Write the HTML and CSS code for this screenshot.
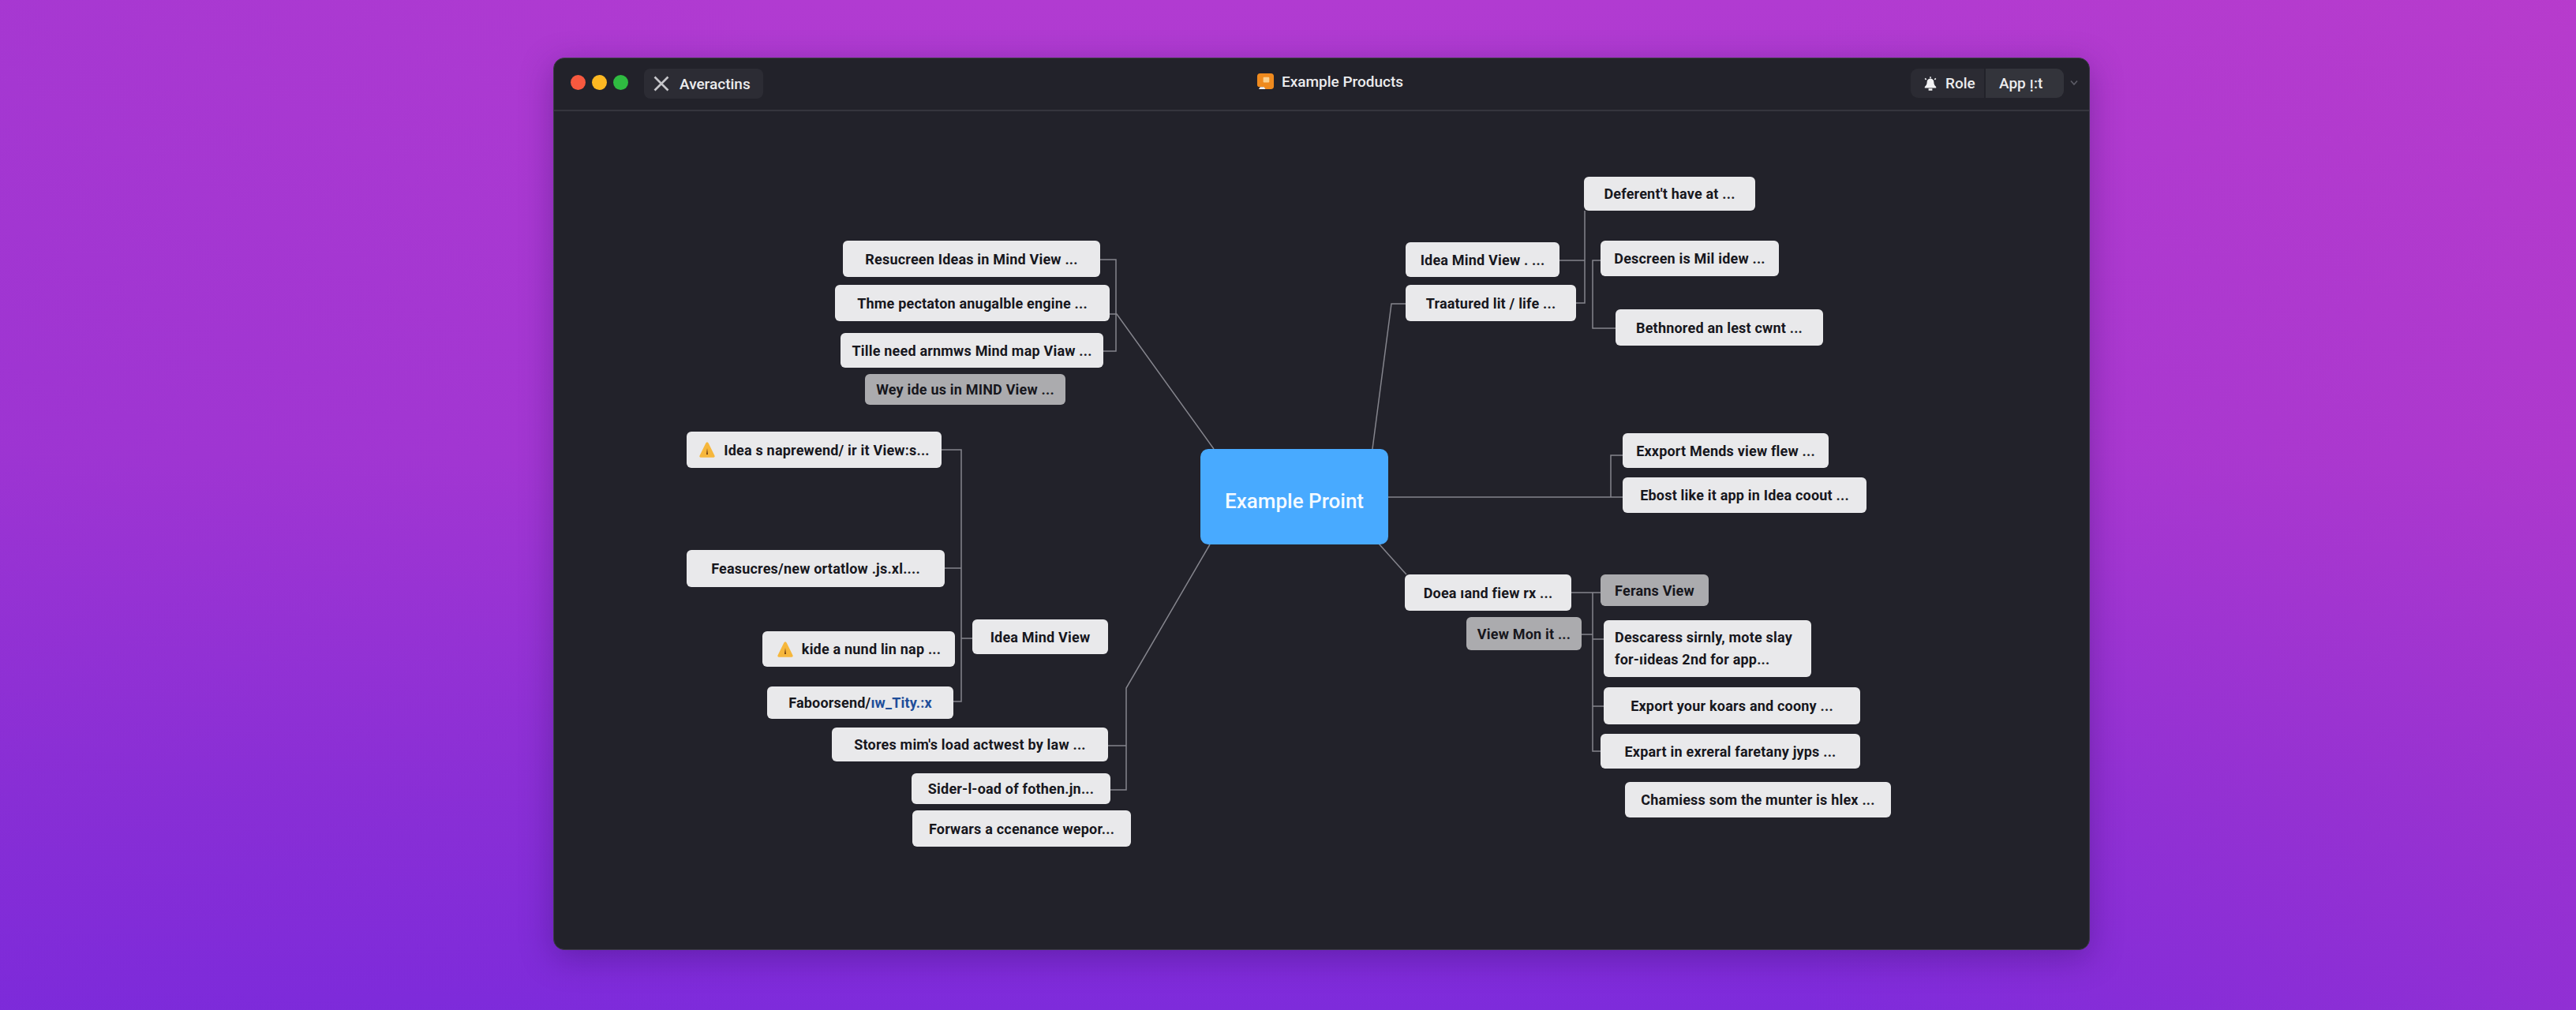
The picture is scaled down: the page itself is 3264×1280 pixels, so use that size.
FILE: index.html
```html
<!DOCTYPE html>
<html lang="en">
<head>
<meta charset="utf-8" />
<meta name="viewport" content="width=device-width,initial-scale=1" />
<title>Example Products</title>
<link rel="stylesheet" href="styles.css">
</head>
<body>
<div class="window">
  <header class="titlebar">
    <div class="bar-left">
      <div class="lights">
        <span class="light red"></span>
        <span class="light yellow"></span>
        <span class="light green"></span>
      </div>
      <div class="tab">
        <svg class="tab-x" viewBox="0 0 20 20"><path d="M1.5 1.5 18.5 18.5M18.5 1.5 1.5 18.5"/></svg>
        <span>Averactins</span>
      </div>
    </div>
    <div class="bar-title">
      <svg class="app-icon" viewBox="0 0 24 24">
        <path d="M5 1h14a4 4 0 0 1 4 4v13a4 4 0 0 1-4 4h-7l-3-3H4a3 3 0 0 1-3-3V5a4 4 0 0 1 4-4z" fill="#ef8a1e"/>
        <rect x="9" y="6" width="8" height="7" rx="1" fill="#fbd08e"/>
        <path d="M3 22l2-3h5l2 3z" fill="#f1f1f4"/>
      </svg>
      <span>Example Products</span>
    </div>
    <div class="bar-right">
      <div class="switch">
        <div class="switch-role">
          <svg class="bell" viewBox="0 0 20 20">
            <path d="M10 1.2v2M3.2 3.4l1.5 1.4M16.8 3.4l-1.5 1.4" stroke="#f2f2f4" stroke-width="1.6" fill="none"/>
            <path d="M10 3.5c-3 0-4.4 2.2-4.4 4.8 0 2.6-1 4-2.8 5.6v1.6h14.4v-1.600c-1.800-1.600-2.800-3-2.800-5.600 0-2.600-1.400-4.800-4.400-4.800zM7.600 16.200h4.800v2.600H7.600z" fill="#f2f2f4"/>
          </svg>
          <span>Role</span>
        </div>
        <div class="switch-app">App ᴉ:t</div>
      </div>
      <svg class="chev" viewBox="0 0 10 8"><path d="M1 1.500 5 6l4-4.500"/></svg>
    </div>
  </header>

  <main class="canvas">
    <svg class="links" viewBox="702 141 1945 1063">
      <!-- top left -->
      <path d="M1394 329H1414V445H1398"/>
      <path d="M1406 398H1415L1538 569"/>
      <!-- left group -->
      <path d="M1193 570H1218V889H1208"/>
      <path d="M1197 720H1218"/>
      <path d="M1218 809H1232"/>
      <!-- bottom left -->
      <path d="M1533 690 1427 872V1001H1407"/>
      <path d="M1404 945H1427"/>
      <!-- top right -->
      <path d="M1739 569 1763 385H1781"/>
      <path d="M1976 330H2008"/>
      <path d="M2008 267V384H1997"/>
      <path d="M2028 330H2018V416H2047"/>
      <!-- right -->
      <path d="M1759 630H2056"/>
      <path d="M2056 577H2041V630"/>
      <!-- bottom right -->
      <path d="M1747 689 1782 728"/>
      <path d="M1991 751H2028"/>
      <path d="M2018 751V952H2028"/>
      <path d="M2004 804H2018"/>
      <path d="M2018 810H2032"/>
      <path d="M2018 895H2032"/>
    </svg>

    <div class="center-node">Example Proint</div>

    <div class="node n-resucreen">Resucreen Ideas in Mind View ...</div>
    <div class="node n-thme">Thme pectaton anugalble engine ...</div>
    <div class="node n-tille">Tille need arnmws Mind map Viaw ...</div>
    <div class="node muted n-wey">Wey ide us in MIND View ...</div>

    <div class="node n-ideas">
      <svg class="warn" viewBox="0 0 22 22"><path d="M11 1.500c1 0 1.500.6 1.900 1.500l7.600 15.500c.5 1.200-.1 2.200-1.400 2.200H2.900c-1.300 0-1.900-1-1.400-2.200L9.100 3c.4-.9.9-1.500 1.900-1.500z" fill="#f6b73c"/><path d="M11 9l1 8h-2z" fill="#6b3a10"/></svg>
      <span>Idea s naprewend/ ir it View:s...</span>
    </div>
    <div class="node n-feas">Feasucres/new ortatlow .js.xl....</div>
    <div class="node n-kide">
      <svg class="warn" viewBox="0 0 22 22"><path d="M11 1.500c1 0 1.500.6 1.900 1.500l7.600 15.500c.5 1.200-.1 2.200-1.400 2.200H2.900c-1.300 0-1.900-1-1.400-2.200L9.100 3c.4-.9.9-1.500 1.900-1.500z" fill="#f6b73c"/><path d="M11 9l1 8h-2z" fill="#6b3a10"/></svg>
      <span>kide a nund lin nap ...</span>
    </div>
    <div class="node n-fabo"><span>Faboorsend/<span class="blue">ıw_Tity.:x</span></span></div>
    <div class="node n-mind">Idea Mind View</div>

    <div class="node n-stores">Stores mim's load actwest by law ...</div>
    <div class="node n-sider">Sider-l-oad of fothen.jn...</div>
    <div class="node n-forwars">Forwars a ccenance wepor...</div>

    <div class="node n-deferent">Deferent't have at ...</div>
    <div class="node n-ideaview">Idea Mind View . ...</div>
    <div class="node n-traat">Traatured lit / life ...</div>
    <div class="node n-descreen">Descreen is Mil idew ...</div>
    <div class="node n-beth">Bethnored an lest cwnt ...</div>
    <div class="node n-exx">Exxport Mends view flew ...</div>
    <div class="node n-ebost">Ebost like it app in Idea coout ...</div>

    <div class="node n-doea">Doea ıand fiew rx ...</div>
    <div class="node muted n-viewmon">View Mon it ...</div>
    <div class="node muted n-ferans">Ferans View</div>
    <div class="node two n-descar">Descaress sirnly, mote slay<br>for-ıideas 2nd for app...</div>
    <div class="node n-export">Export your koars and coony ...</div>
    <div class="node n-expart">Expart in exreral faretany jyps ...</div>
    <div class="node n-chami">Chamiess som the munter is hlex ...</div>
  </main>
</div>
</body>
</html>
```

FILE: styles.css
```css
*{box-sizing:border-box;}
html,body{height:100%;}
body{
  margin:0;
  padding:73px 616px 76px 701px;
  font-family:Roboto,"Noto Sans",sans-serif;
  background:
    linear-gradient(90deg,rgba(120,40,210,.18),rgba(120,40,210,0) 30%,rgba(200,60,190,0) 70%,rgba(200,60,190,.25)),
    linear-gradient(180deg,#b13bd1 0%,#a537d2 45%,#8a2fd6 80%,#7e2bdb 100%);
  overflow:hidden;
}

.window{
  height:1131px;
  display:flex;
  flex-direction:column;
  background:#22222a;
  border:1px solid #3c3c46;
  border-radius:14px;
  box-shadow:0 10px 40px rgba(40,10,90,.35);
  overflow:hidden;
}

/* title bar */
.titlebar{
  flex:none;
  height:67px;
  display:grid;
  grid-template-columns:1fr auto 1fr;
  align-items:center;
  padding:0 14px 4px 21px;
  border-bottom:2px solid #35353d;
  color:#ececee;
  font-size:19px;
  font-weight:500;
}
.bar-left{display:flex;align-items:center;gap:20px;}
.lights{display:flex;gap:8px;}
.light{width:19px;height:19px;border-radius:50%;}
.red{background:#f8593f;}
.yellow{background:#fdb822;}
.green{background:#2fbb41;}
.tab{
  height:38px;
  width:151px;
  display:flex;
  align-items:center;
  gap:13px;
  padding-left:12px;
  background:#2c2c34;
  border-radius:8px;
  margin-top:3px;
}
.tab-x{width:20px;height:20px;fill:none;stroke:#c6c6ca;stroke-width:2.6;}
.bar-title{display:flex;align-items:center;gap:9px;margin-left:14px;margin-top:-3px;}
.app-icon{width:23px;height:23px;}
.bar-right{display:flex;align-items:center;justify-content:flex-end;gap:8px;}
.switch{display:flex;height:37px;border-radius:9px;overflow:hidden;margin-top:2px;}
.switch-role{
  width:95px;
  display:flex;
  align-items:center;
  gap:9px;
  padding-left:15px;
  background:#2b2b33;
  border-right:2px solid #22222a;
}
.bell{width:20px;height:20px;}
.switch-app{width:99px;padding-left:17px;line-height:37px;background:#33343b;}
.chev{width:10px;height:8px;fill:none;stroke:#5c5c66;stroke-width:1.6;}

/* mind map */
.canvas{position:relative;flex:1;}
.links{position:absolute;left:0;top:0;width:1945px;height:1063px;}
.links path{fill:none;stroke:#85858d;stroke-width:1.500;}

.center-node{
  position:absolute;
  left:819px;
  top:428px;
  width:238px;
  height:121px;
  display:flex;
  align-items:center;
  justify-content:center;
  padding-top:10px;
  background:#48aaff;
  border-radius:10px;
  color:#f4faff;
  font-size:26px;
  font-weight:500;
}

.node{
  position:absolute;
  display:flex;
  align-items:center;
  justify-content:center;
  background:#e9e9eb;
  border-radius:6px;
  color:#17171d;
  font-size:18px;
  font-weight:700;
  letter-spacing:.2px;
  white-space:nowrap;
}
.muted{background:#ababae;}
.two{display:block;padding:8px 14px;line-height:28px;}
.blue{color:#1f4e9a;}
.warn{width:22px;height:22px;flex:none;margin-right:10px;}

.n-resucreen{left:366px;top:164px;width:326px;height:46px;}
.n-thme{left:356px;top:220px;width:348px;height:46px;}
.n-tille{left:363px;top:281px;width:333px;height:44px;}
.n-wey{left:394px;top:333px;width:254px;height:39px;}
.n-ideas{left:168px;top:406px;width:323px;height:46px;}
.n-feas{left:168px;top:556px;width:327px;height:47px;}
.n-kide{left:264px;top:659px;width:244px;height:45px;}
.n-fabo{left:270px;top:729px;width:236px;height:41px;}
.n-mind{left:530px;top:644px;width:172px;height:44px;}
.n-stores{left:352px;top:781px;width:350px;height:43px;}
.n-sider{left:453px;top:839px;width:252px;height:39px;}
.n-forwars{left:454px;top:886px;width:277px;height:46px;}
.n-deferent{left:1305px;top:83px;width:217px;height:43px;}
.n-ideaview{left:1079px;top:166px;width:195px;height:44px;}
.n-traat{left:1079px;top:220px;width:216px;height:46px;}
.n-descreen{left:1326px;top:164px;width:226px;height:45px;}
.n-beth{left:1345px;top:251px;width:263px;height:46px;}
.n-exx{left:1354px;top:408px;width:261px;height:44px;}
.n-ebost{left:1354px;top:464px;width:309px;height:45px;}
.n-doea{left:1078px;top:587px;width:211px;height:46px;}
.n-viewmon{left:1156px;top:641px;width:146px;height:42px;}
.n-ferans{left:1326px;top:587px;width:137px;height:40px;}
.n-descar{left:1330px;top:645px;width:263px;height:72px;}
.n-export{left:1330px;top:730px;width:325px;height:47px;}
.n-expart{left:1326px;top:789px;width:329px;height:44px;}
.n-chami{left:1357px;top:850px;width:337px;height:45px;}
```
